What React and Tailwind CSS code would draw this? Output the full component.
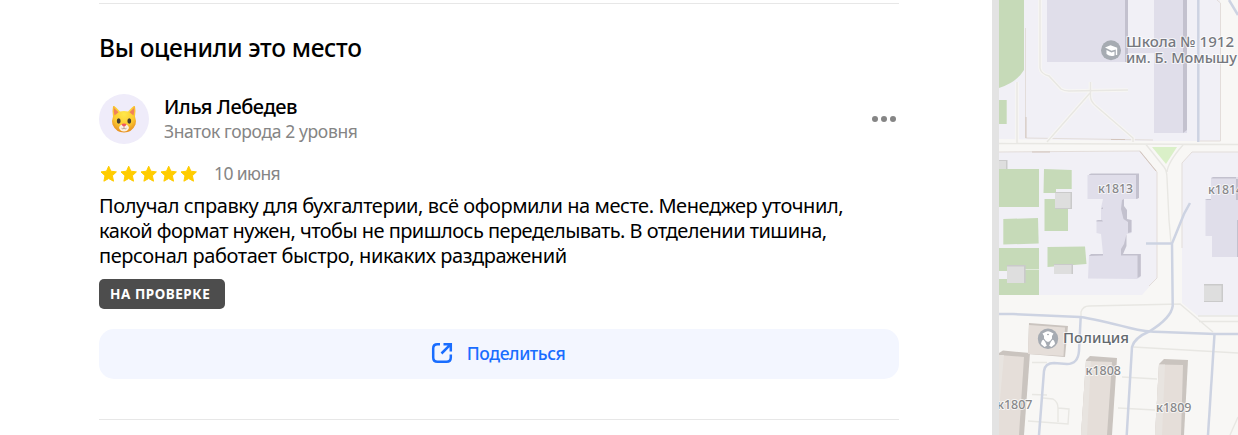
const STARS = [0, 1, 2, 3, 4];

const REVIEW_LINES = [
  { text: "Получал справку для бухгалтерии, всё оформили на месте. Менеджер уточнил,", cls: "tracking-[-0.43px]" },
  { text: "какой формат нужен, чтобы не пришлось переделывать. В отделении тишина,", cls: "tracking-[-0.54px]" },
  { text: "персонал работает быстро, никаких раздражений", cls: "tracking-[-0.41px]" },
];

const CatIcon = () => (
  <svg width="28" height="30" viewBox="0 0 28 30">
    <defs>
      <radialGradient id="fur" cx="50%" cy="30%" r="72%">
        <stop offset="0" stopColor="#ffe94a" />
        <stop offset="0.6" stopColor="#fcca30" />
        <stop offset="1" stopColor="#e58a20" />
      </radialGradient>
    </defs>
    <path
      d="M3 2.500C3.500 1.500 4.500 2 6 3.500L10 7.500Q14 6.500 18 7.500L22 3.500C23.500 2 24.500 1.500 25 2.500Q26 7 25 12.500Q26.600 17 25.500 20.500Q22 28.500 14 28.500Q6 28.500 2.500 20.500Q1.400 17 3 12.500Q2 7 3 2.500Z"
      fill="url(#fur)"
    />
    <path d="M4 4L8.500 8.300L4.500 11.500Q3.500 8 4 4Z" fill="#f0805a" />
    <path d="M24 4L19.500 8.300L23.500 11.500Q24.500 8 24 4Z" fill="#f0805a" />
    <path d="M14 20Q9.500 20.500 9 24Q10.500 27.500 14 27.500Q17.500 27.500 19 24Q18.500 20.500 14 20Z" fill="#fbf0e2" />
    <ellipse cx="8.700" cy="17" rx="1.900" ry="2.700" fill="#453d31" />
    <ellipse cx="19.300" cy="17" rx="1.900" ry="2.700" fill="#453d31" />
    <path d="M11.500 20Q14 18.800 16.500 20Q16 22.300 14 22.800Q12 22.300 11.500 20Z" fill="#f0545f" />
    <path d="M14 22.500V24.300M11.500 24.300Q13 25.500 14 24.300Q15 25.500 16.500 24.300" fill="none" stroke="#a9938a" strokeWidth=".8" />
  </svg>
);

const Star = () => (
  <svg width="20" height="20" viewBox="0 0 20 20">
    <path
      d="M9.700 2.200L11.900 7.200L17.400 7.900L13.400 11.700L14.500 17.200L9.700 14.500L4.900 17.200L6 11.700L2 7.900L7.500 7.200Z"
      fill="#ffcc00"
      stroke="#ffcc00"
      strokeWidth="1"
      strokeLinejoin="round"
    />
  </svg>
);

const ShareIcon = () => (
  <svg width="22" height="22" viewBox="0 0 22 22" fill="none" stroke="#196dff" strokeWidth="2.500">
    <path d="M9 2.300H6.500Q2.200 2.300 2.200 6.500V15.500Q2.200 19.800 6.500 19.800H15.500Q19.800 19.800 19.800 15.500V12.500" />
    <path d="M10.500 11.500L19.300 2.700M12.500 2.300H19.800V9.500" />
  </svg>
);

const MapLabel = ({ x, y, width, size = 13, fill = "#88888a", weight = 500, children }) => (
  <text
    x={x}
    y={y}
    textLength={width}
    lengthAdjust="spacingAndGlyphs"
    fontSize={size}
    fontWeight={weight}
    fill={fill}
    stroke="#fff"
    strokeOpacity="0.7"
    strokeWidth="2"
    strokeLinejoin="round"
    paintOrder="stroke"
  >
    {children}
  </text>
);

const CityMap = () => (
  <svg className="block h-full w-full" viewBox="0 0 239 435" fontFamily="'Noto Sans', sans-serif">
    <rect width="239" height="435" fill="#f8f7f5" />

    {/* quarters */}
    <g fill="#f1f0f6">
      <path d="M0 0H221V141H154L0 139Z" />
      <path d="M0 152L141 151L158 172V278L143 295H0Z" />
      <path d="M239 152H193L183 163V303L199 316H239Z" />
    </g>
    <g fill="none" stroke="#e3ddda" strokeWidth="1">
      <path d="M26.500 28V138L154 140M201 141H221.500V3L218 0" />
      <path d="M0 152L141 151L158 172V278L150 286M239 152H193L183 163V248" />
    </g>
    <path d="M27 117V138M112 139.500H126M33 152H51M141 151.500L157 171" fill="none" stroke="#d3c5bd" />

    {/* greenery */}
    <g fill="#c6dab8">
      <path d="M0 0H25V70Q18 82 0 88Z" />
      <path d="M0 100H7.700V124H0Z" />
      <path d="M0 169H40V207H0Z" />
      <path d="M45 169L72.700 170V189H57V193L44.500 193Z" />
      <path d="M45.500 199H69V231H45.500Z" />
      <path d="M4.300 219L39 218L39.700 243.500L4.300 244.500Z" />
      <path d="M0 248H40V295H0V279H8V271H0Z" />
      <path d="M48.500 247L86 246.500L87.500 264L48.500 267Z" />
    </g>
    <path d="M26 269.500H40" stroke="#e1ebdb" />
    <path d="M153 147H178L167 164Z" fill="#daf0c8" />

    {/* footpaths */}
    <g fill="none" stroke="#f7f6f4" strokeWidth="3.500">
      <path d="M41 0V68Q42 74 50 76L62 89Q65 91 70 91L129 90" />
      <path d="M91.500 82V97Q92 102 97 106L134 138V142M91 93L48 142M18 82V143" />
    </g>
    <g fill="none" stroke="#e8e7e3" strokeWidth="1.400">
      <path d="M41 0V68Q42 74 50 76L62 89Q65 91 70 91L129 90" />
      <path d="M91.500 82V97Q92 102 97 106L134 138V142M91 93L48 142M18 82V143" />
      <path d="M0 143.500L239 144.500M147 144.500L165 167Q168 171 168 178L170 220L172 243M184 145Q169 162 168 172" />
      <path d="M82 316V312Q84 306 90 306L181 304L214 332M134 347L239 353M199 316H239M200 321.500H239" />
      <path d="M33 362.500H48M123 377L158 379M119 408L156 410M33 394.500L48 395M44 398L54 399Q59 402 59 408V422M59 408L70 409L69 424L29 421M239 417L231 435" />
    </g>

    {/* roads */}
    <g fill="none" stroke="#cdd3e2" strokeWidth="2.500">
      <path d="M199.300 0V142M230 0L239 15" />
      <path d="M147 243.500H173M191 203L185 214L173 243.500L173.700 306Q172 318 151 331Q135 338 133 347L127.700 435" />
      <path d="M0 314H14L81 317Q96 319 131 328Q146 332 163 332L216 334H239" />
      <path d="M81.700 317L80 351Q79 364 68 364L55 363Q46 363 45 371L40 435" />
      <path d="M215.500 334L209 435" />
    </g>

    {/* school buildings */}
    <g fill="#e0deea">
      <path d="M48 0H129V62H48Z" />
      <path d="M155 0H188V133H155Z" />
      <path d="M129 48H155V53H129Z" />
      <path d="M88.500 175L139 174V199H125V208L128 220H132.500V233L127.500 234L124 254H141.500V277L138 279L89 278.500L90 255L104 254L102 234L97.500 233V220H102V208L104 199H88.500Z" />
      <path d="M212 178L239 177V257H213V236H206.500V199H212Z" />
    </g>
    <g fill="#c3c1ce">
      <path d="M126 0H129V62H126Z" />
      <path d="M184 0H188V130L184 133Z" />
      <path d="M90 174.500L92 173.500H140V198L137 199V175H90Z" />
      <path d="M123 200L125 199V206L128 210V219L132.500 220V232L129 233V222L124.500 219L122 209Z" />
      <path d="M127.500 234V246L124 254H141.800V276L138.500 278V255.500H122V249L125 244Z" />
      <path d="M90 256L92 254H104V255.500ZM97 221L99 220H103L104 221.500H98ZM102 209L104 207V209Z" />
      <path d="M212 178L214 177H237V178.500H213ZM206 200L208 199H212V200Z" />
      <path d="M237 179H239V200H237ZM238 220H239V257H238Z" />
    </g>

    {/* sheds */}
    <g>
      <path d="M56 192H73V209H56ZM55 264H74V274H55ZM8 265H26.600V283H8ZM0 160H8.500V169H0ZM205 284H224V302H205Z" fill="#cacaca" />
      <path d="M56 193H71.500V208H56ZM55 265H72.500V274H55ZM8 266.500H25V283H8ZM0 161H7V169H0ZM205 285.500H222.500V301H205Z" fill="#dedede" />
    </g>

    {/* houses */}
    <g fill="#cac4bf">
      <path d="M30 323L69 326L66 357L29 354Z" />
      <path d="M0 353L4 350.500L31 353L25 435H0Z" />
      <path d="M87 360L91 356L118 358L113 435H82Z" />
      <path d="M160 364L165 359L189 360L185 435H156Z" />
    </g>
    <g fill="#e5ded9">
      <path d="M30 325L66 327.500L64.500 356L29 354Z" />
      <path d="M0 355L25 357L20 435H0Z" />
      <path d="M87 361L113 362L108 435H82Z" />
      <path d="M160 364.500L184 365L182 435H156Z" />
    </g>
    <path d="M5 355L0 410V355ZM87 361H92L88 435H82ZM160 364.500H166L163 435H156Z" fill="#e8e4e0" />

    {/* pins */}
    <circle cx="112" cy="50.300" r="10" fill="#a6abb2" />
    <path d="M106 47.500L111.500 45.200L118.200 47.700V55H116.800V49.500L112.500 50.800L106 47.500Z" fill="#fff" />
    <path d="M107.500 50L112.400 52.400L115.500 51.400V55.500Q111 57 107.500 54Z" fill="#fff" />
    <circle cx="49" cy="338.700" r="10.200" fill="#a6abb2" />
    <path d="M46.500 332Q49 330.500 51.500 332L54.500 333.500L53 336V338.500Q51 342 49 342Q47 342 45 338.500V336L43.500 333.500Z" fill="#fff" />
    <path d="M42 344Q42.500 340 44.500 339.800Q47 342 47.800 345.800L45.500 347ZM56 344Q55.500 340 53.500 339.800Q51 342 50.200 345.800L52.500 347Z" fill="#fff" />
    <circle cx="49" cy="334.500" r=".8" fill="#8f959d" />

    <MapLabel x={127} y={46.500} width={108} size={14.500} weight={500} fill="#75787e">Школа № 1912</MapLabel>
    <MapLabel x={127} y={62.500} width={111} size={14.500} weight={500} fill="#75787e">им. Б. Момышу</MapLabel>
    <MapLabel x={99} y={192.500} width={35}>к1813</MapLabel>
    <MapLabel x={209} y={194} width={35}>к1814</MapLabel>
    <MapLabel x={64} y={342.500} width={66} size={14.500} weight={500} fill="#63696e">Полиция</MapLabel>
    <MapLabel x={86.500} y={375} width={35.500}>к1808</MapLabel>
    <MapLabel x={-2} y={409} width={35.500}>к1807</MapLabel>
    <MapLabel x={157} y={411.500} width={35.500}>к1809</MapLabel>
  </svg>
);

export default function App() {
  return (
    <div className="flex h-[435px] w-[1238px] overflow-hidden bg-white font-['Noto_Sans',sans-serif] text-black">
      <main className="w-[992px] shrink-0 pt-[3px] pl-[99px]">
        <section className="h-[417px] w-[800px] border-y border-[#e7e7e7] pt-7">
          <h2 className="h-8 text-[24.5px] leading-8 font-medium tracking-[-0.33px] whitespace-nowrap">
            <span>Вы оценили это место</span>
          </h2>

          <div className="mt-[30px] flex h-[50px] items-center">
            <div className="flex size-[50px] items-center justify-center rounded-full bg-[#efecfa]">
              <CatIcon />
            </div>
            <div className="ml-[15px] grow whitespace-nowrap">
              <div className="text-[20px] leading-[25px] font-medium tracking-[-0.45px]">
                <span>Илья Лебедев</span>
              </div>
              <div className="text-[17.5px] leading-[25px] tracking-[-0.36px] text-[#858585]">
                <span>Знаток города 2 уровня</span>
              </div>
            </div>
            <button className="mr-[3px] flex gap-[3px]" aria-label="Ещё">
              <i className="size-[6px] rounded-full bg-[#858585]" />
              <i className="size-[6px] rounded-full bg-[#858585]" />
              <i className="size-[6px] rounded-full bg-[#858585]" />
            </button>
          </div>

          <div className="mt-[17px] flex h-[25px] items-center">
            <div className="flex">
              {STARS.map((star) => (
                <Star key={star} />
              ))}
            </div>
            <span className="ml-[15px] text-[17.5px] leading-[25px] tracking-[-0.6px] text-[#858585]">
              10 июня
            </span>
          </div>

          <div className="mt-[7px] text-[20px] leading-[25px] whitespace-nowrap">
            {REVIEW_LINES.map((line) => (
              <p key={line.text} className={line.cls}>
                <span>{line.text}</span>
              </p>
            ))}
          </div>

          <div className="mt-[11px] flex h-[30px] w-[126px] items-center rounded-[5px] bg-[#4d4d4d] pl-[11px] text-[13.5px] font-bold tracking-[0.55px] whitespace-nowrap text-white">
            НА ПРОВЕРКЕ
          </div>

          <button className="mt-5 flex h-[50px] w-full items-center justify-center rounded-[15px] bg-[#f3f6ff] pr-[2px] pb-[2px] text-[17.5px] font-medium tracking-[-0.4px] text-[#196dff]">
            <ShareIcon />
            <span className="ml-[14px]">Поделиться</span>
          </button>
        </section>
      </main>

      <aside className="flex grow">
        <div className="w-[7px] shrink-0 bg-[#e3e3e3]" />
        <div className="h-full w-[239px] shrink-0">
          <CityMap />
        </div>
      </aside>
    </div>
  );
}
